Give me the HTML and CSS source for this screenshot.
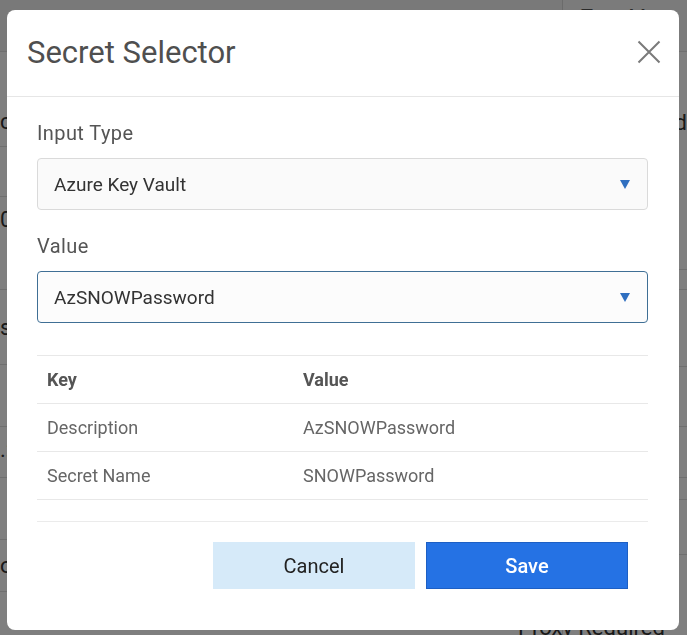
FILE: index.html
```html
<!DOCTYPE html>
<html>
<head>
    <meta charset="utf-8">
    <title>Secret Selector</title>
    <link rel="stylesheet" href="styles.css">
</head>

<body>
    <div class="page">
        <div class="page-main">
            <div class="row row-top"></div>
            <div class="row row-a"><span class="cell-text">cert</span></div>
            <div class="row row-b"></div>
            <div class="row row-c"><span class="cell-text">0.0</span></div>
            <div class="row row-d"><span class="cell-text">sync</span></div>
            <div class="row row-e"></div>
            <div class="row row-f"><span class="cell-text">.:</span></div>
            <div class="row row-g"></div>
            <div class="row row-h"><span class="cell-text">on</span></div>
            <div class="row row-i"></div>
        </div>
        <div class="page-side">
            <div class="row row-top side-head"><span class="head-text">Type Mass</span></div>
            <div class="row side-a"><span class="side-text">cd</span></div>
            <div class="row side-b"></div>
            <div class="row side-c"></div>
            <div class="row side-d"><span class="side-text">y</span></div>
            <div class="row side-e"></div>
            <div class="row side-f"></div>
            <div class="row side-g"><span class="side-text pen">&#9998;</span></div>
            <div class="row side-h"><span class="side-text foot">Proxy Required</span></div>
        </div>
    </div>

    <div class="backdrop"></div>

    <div class="modal">
        <div class="modal-header">
            <div class="modal-title">Secret Selector</div>
            <div class="close">
                <svg width="24" height="24" viewBox="0 0 24 24">
                    <path d="M1.5 1.5 L22.5 22.5 M22.5 1.5 L1.5 22.5" stroke="#7a7a7a" stroke-width="2" fill="none"/>
                </svg>
            </div>
        </div>

        <div class="modal-body">
            <div class="field-label">Input Type</div>
            <div class="select">
                <span>Azure Key Vault</span>
                <span class="caret"></span>
            </div>

            <div class="field-label">Value</div>
            <div class="select focused">
                <span>AzSNOWPassword</span>
                <span class="caret"></span>
            </div>

            <div class="table">
                <div class="tr th">
                    <div class="td">Key</div>
                    <div class="td">Value</div>
                </div>
                <div class="tr">
                    <div class="td">Description</div>
                    <div class="td">AzSNOWPassword</div>
                </div>
                <div class="tr">
                    <div class="td">Secret Name</div>
                    <div class="td">SNOWPassword</div>
                </div>
            </div>

            <div class="modal-footer">
                <div class="btn btn-cancel">Cancel</div>
                <div class="btn btn-save">Save</div>
            </div>
        </div>
    </div>
</body>
</html>
```

FILE: styles.css
```css
body {
    margin: 0;
    padding: 0;
    font-family: Roboto, "Liberation Sans", sans-serif;
    background: #fff;
    overflow: hidden;
}

/* page behind the dialog */

.page {
    display: flex;
    height: 635px;
}

.page-main {
    width: 580px;
    display: flex;
    flex-direction: column;
}

.page-side {
    flex: 1;
    display: flex;
    flex-direction: column;
    border-left: 1px solid #d6d6d6;
}

.row {
    border-bottom: 1px solid #dedede;
    box-sizing: border-box;
    display: flex;
    align-items: center;
    color: #333;
    font-size: 22px;
    line-height: 26px;
    white-space: nowrap;
}

.row-top { height: 52px; background: #f2f2f2; }
.row-a { height: 95px; align-items: flex-end; padding-bottom: 11px; }
.row-b { height: 50px; }
.row-c { height: 93px; align-items: flex-start; padding-top: 10px; }
.row-d { height: 75px; align-items: flex-start; padding-top: 25px; }
.row-e { height: 62px; }
.row-f { height: 51px; align-items: flex-start; padding-top: 10px; }
.row-g { height: 62px; }
.row-h { height: 52px; }
.row-i { flex: 1; border-bottom: none; }

.side-head {
    align-items: flex-start;
    background: #f7f7f7;
}

.head-text {
    padding: 4px 0 0 18px;
    font-size: 20px;
    color: #555;
}

.side-a { height: 218px; align-items: flex-start; padding-top: 58px; }
.side-b { height: 20px; }
.side-c { height: 77px; }
.side-d { height: 60px; }
.side-e { height: 51px; }
.side-f { height: 22px; }
.side-g { height: 55px; }
.side-h { flex: 1; border-bottom: none; align-items: flex-end; }

.side-text {
    padding-left: 100px;
}

.pen {
    font-size: 20px;
}

.foot {
    padding-left: 0;
    margin-left: -45px;
    font-size: 22px;
    line-height: 14px;
}

.backdrop {
    position: fixed;
    top: 0;
    left: 0;
    right: 0;
    bottom: 0;
    background: rgba(0, 0, 0, 0.5);
}

/* dialog */

.modal {
    position: fixed;
    top: 10px;
    left: 7px;
    width: 672px;
    height: 620px;
    background: #fff;
    border-radius: 8px;
    display: flex;
    flex-direction: column;
}

.modal-header {
    height: 87px;
    box-sizing: border-box;
    display: flex;
    align-items: center;
    justify-content: space-between;
    padding: 0 18px 2px 20px;
    border-bottom: 1px solid #e6e6e6;
}

.modal-title {
    font-size: 31px;
    color: #4f4f4f;
}

.close {
    width: 24px;
    height: 24px;
    display: flex;
}

.modal-body {
    padding: 0 31px 0 30px;
    display: flex;
    flex-direction: column;
}

.field-label {
    font-size: 20px;
    line-height: 24px;
    letter-spacing: 0.4px;
    color: #555;
    margin-top: 24px;
    margin-bottom: 13px;
}

.select {
    height: 52px;
    box-sizing: border-box;
    border: 1px solid #dadada;
    border-radius: 4px;
    background: #fafafa;
    display: flex;
    align-items: center;
    justify-content: space-between;
    padding: 0 17px 0 16px;
    font-size: 19px;
    color: #333;
}

.select.focused {
    border-color: #3f6f95;
    background: #fcfcfc;
}

.caret {
    width: 0;
    height: 0;
    border-left: 5.5px solid transparent;
    border-right: 5.5px solid transparent;
    border-top: 9px solid #2f6fc0;
}

.table {
    margin-top: 32px;
    border-top: 1px solid #e8e8e8;
}

.tr {
    display: grid;
    grid-template-columns: 256px 1fr;
    height: 48px;
    box-sizing: border-box;
    border-bottom: 1px solid #e8e8e8;
    align-items: center;
    font-size: 18px;
    color: #666;
}

.th {
    font-weight: bold;
    color: #555;
}

.td {
    padding: 0 10px;
}

.modal-footer {
    margin-top: 21px;
    border-top: 1px solid #ebebeb;
    padding: 20px 20px 0 0;
    display: flex;
    justify-content: flex-end;
    gap: 11px;
}

.btn {
    width: 202px;
    height: 47px;
    box-sizing: border-box;
    display: flex;
    justify-content: center;
    align-items: center;
    font-size: 20px;
    cursor: pointer;
}

.btn-cancel {
    background: #d6eaf9;
    color: #222;
}

.btn-save {
    background: #2572e4;
    border: 1px solid #1d5fc4;
    color: #fff;
    font-weight: 500;
}
```
